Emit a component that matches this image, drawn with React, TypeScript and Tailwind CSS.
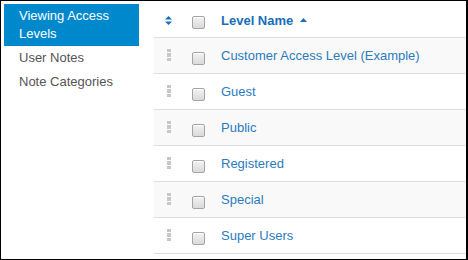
import React from "react";

const rows = [
  "Customer Access Level (Example)",
  "Guest",
  "Public",
  "Registered",
  "Special",
  "Super Users",
];

function Checkbox({ className = "" }: { className?: string }) {
  return (
    <span
      className={
        "block w-[13px] h-[13px] rounded-[2px] border border-[#a3a3a3] bg-gradient-to-b from-[#f2f2f2] to-[#dadada] shadow-[inset_0_1px_0_#fff] " +
        className
      }
    />
  );
}

function Handle() {
  return (
    <svg width="4" height="12" viewBox="0 0 4 12" className="block mt-[-2px]">
      <rect x="0" y="0" width="4" height="3" fill="#c8c8c8" />
      <rect x="0" y="4" width="4" height="4" fill="#c8c8c8" />
      <rect x="0" y="9" width="4" height="3" fill="#c8c8c8" />
    </svg>
  );
}

export default function App() {
  return (
    <div
      className="w-[468px] h-[260px] box-border border-black border-l border-t border-r-2 border-b bg-white flex pt-[3px] pl-[3px] text-[13px]"
      style={{ fontFamily: '"Liberation Sans", Arial, sans-serif' }}
    >
      <div className="w-[135px] shrink-0 mr-[15px] flex flex-col">
        <div className="bg-[#0088cc] text-white px-[15px] py-[3px] leading-[18px]">
          Viewing Access Levels
        </div>
        <div className="text-[#555] px-[15px] py-[3px] leading-[18px]">User Notes</div>
        <div className="text-[#555] px-[15px] py-[3px] leading-[18px]">Note Categories</div>
      </div>
      <div className="flex-1 flex flex-col">
        <div className="h-[34px] border-b border-[#dddddd] flex items-center">
          <div className="w-[30px] flex justify-center">
            <svg width="7" height="9" viewBox="0 0 7 9" className="block ml-[-2px] mt-[-1px]">
              <path d="M3.5 0 L7 3.5 L0 3.5 Z" fill="#1a6dba" />
              <path d="M0 5.5 L7 5.5 L3.5 9 Z" fill="#1a6dba" />
            </svg>
          </div>
          <div className="w-[29px] flex justify-center">
            <Checkbox className="mt-[4px]" />
          </div>
          <div className="pl-[8px] flex items-center font-bold text-[#1a6dba]">
            <span>Level Name</span>
            <svg width="7" height="4" viewBox="0 0 7 4" className="block ml-[7px] mt-[-2px]">
              <path d="M3.5 0 L7 4 L0 4 Z" fill="#1a6dba" />
            </svg>
          </div>
        </div>
        {rows.map((name, i) => (
          <div
            key={name}
            className={
              "h-[36px] border-b border-[#dddddd] flex items-center " +
              (i % 2 === 0 ? "bg-[#f9f9f9]" : "bg-white")
            }
          >
            <div className="w-[30px] flex justify-center">
              <Handle />
            </div>
            <div className="w-[29px] flex justify-center">
              <Checkbox className="mt-[6px]" />
            </div>
            <div className="pl-[8px] text-[#2b7bbf]">{name}</div>
          </div>
        ))}
      </div>
    </div>
  );
}
